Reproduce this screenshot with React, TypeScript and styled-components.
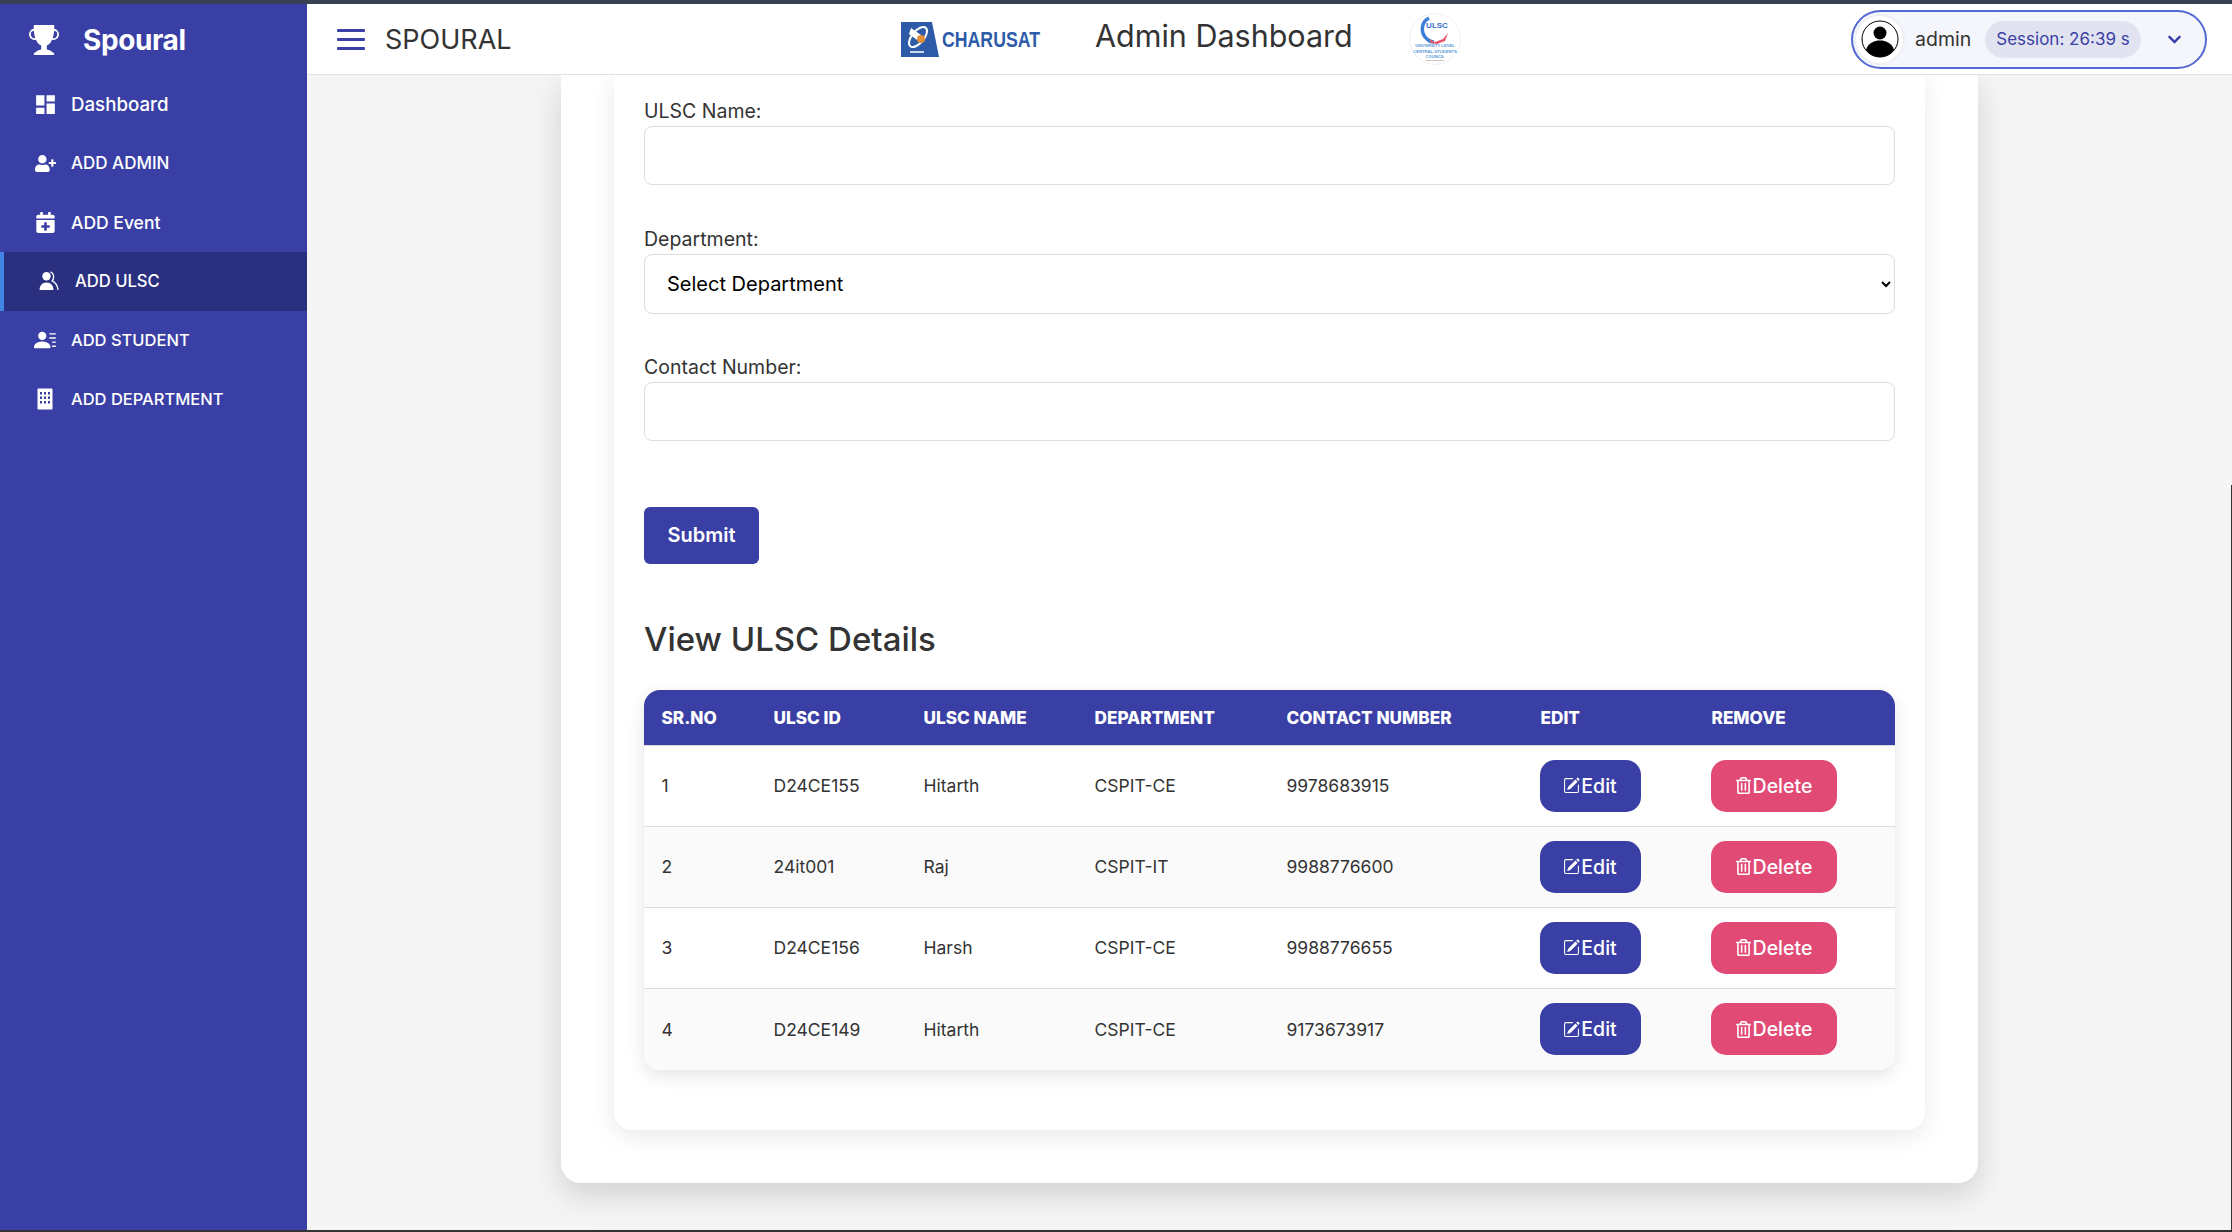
import React from 'react';
import styled, { createGlobalStyle } from 'styled-components';
import { BsTrophyFill, BsPersonLinesFill, BsPencilSquare } from 'react-icons/bs';
import { MdDashboard } from 'react-icons/md';
import { FaRegTrashAlt, FaChevronDown, FaUserPlus, FaCalendarPlus } from 'react-icons/fa';

const INDIGO = '#3a3fa5';
const FONT = 'Inter, "Noto Sans", "Liberation Sans", sans-serif';

const GlobalStyle = createGlobalStyle`
  * { box-sizing: border-box; }
  html, body { margin: 0; height: 100%; overflow: hidden; }
  body { font-family: ${FONT}; background: #f5f5f5; color: #333; }
`;

const Page = styled.div`
  height: 1232px;
  display: flex;
  border-top: 4px solid #374151;
  border-bottom: 2px solid #333;
`;

const Sidebar = styled.aside`
  width: 307px;
  flex: none;
  background: ${INDIGO};
  color: #fff;
`;

const Brand = styled.div`
  height: 71px;
  display: flex;
  align-items: center;
  gap: 24px;
  padding-left: 29px;
  font-size: 28px;
  font-weight: 700;
  letter-spacing: -0.4px;

  svg { width: 30px; height: 30px; }
`;

const NavItem = styled.div<{ $active?: boolean; $size: number }>`
  height: 59px;
  display: flex;
  align-items: center;
  gap: 16px;
  padding-left: 35px;
  padding-bottom: 1px;
  font-size: ${p => p.$size}px;
  font-weight: 500;
  background: ${p => (p.$active ? '#2a2f80' : 'transparent')};
  border-left: ${p => (p.$active ? '4px solid #4285e4' : 'none')};
`;

const IconSlot = styled.span`
  width: 20px;
  flex: none;
  display: flex;
  align-items: center;
  justify-content: center;

  svg { flex: none; }
`;

const Main = styled.div`
  flex: 1;
  min-width: 0;
  display: flex;
  flex-direction: column;
`;

const Header = styled.header`
  height: 71px;
  flex: none;
  display: flex;
  align-items: center;
  background: #fff;
  padding: 0 25px 0 30px;
  border-bottom: 1px solid #e2e2e2;
  position: relative;
  z-index: 2;
`;

const Hamburger = styled.div`
  width: 28px;
  display: flex;
  flex-direction: column;
  gap: 6px;
  margin-right: 20px;

  span { height: 3px; background: ${INDIGO}; border-radius: 1px; }
`;

const AppName = styled.div`
  width: 126px;
  font-size: 27px;
  font-weight: 400;
  color: #333;
  white-space: nowrap;
`;

const CenterGroup = styled.div`
  display: flex;
  align-items: center;
  gap: 55px;
  margin-left: 390px;
`;

const PageTitle = styled.div`
  width: 259px;
  padding-bottom: 7px;
  font-size: 30.5px;
  font-weight: 400;
  color: #333;
  white-space: nowrap;
`;

const UserPill = styled.div`
  margin-left: auto;
  width: 356px;
  height: 59px;
  display: flex;
  align-items: center;
  padding-left: 3px;
  border: 2px solid #5468d4;
  border-radius: 30px;
  background: #f5f6fb;
`;

const Avatar = styled.div`
  width: 47px;
  height: 47px;
  flex: none;
  border-radius: 50%;
  background: #fff;
  display: flex;
  align-items: center;
  justify-content: center;
  box-shadow: 0 0 4px rgba(0, 0, 0, 0.08);
`;

const UserName = styled.span`
  margin-left: 12px;
  width: 70px;
  font-size: 19.5px;
  color: #333;
`;

const SessionBadge = styled.span`
  width: 156px;
  height: 37px;
  display: flex;
  align-items: center;
  justify-content: center;
  border-radius: 19px;
  background: #e1e3f1;
  color: ${INDIGO};
  font-size: 17px;
  white-space: nowrap;
`;

const Chevron = styled.span`
  margin-left: 26px;
  display: flex;
  color: ${INDIGO};

  svg { width: 15px; height: 15px; }
`;

const Content = styled.main`
  flex: 1;
  min-height: 0;
  overflow: hidden;
  padding-left: 254px;
`;

const OuterCard = styled.div`
  width: 1417px;
  height: 1108px;
  padding: 0 53px;
  background: #fff;
  border-radius: 0 0 20px 20px;
  box-shadow: 0 12px 32px rgba(0, 0, 0, 0.15);
`;

const InnerCard = styled.div`
  height: 1055px;
  padding: 24px 30px 0;
  background: #fff;
  border-radius: 0 0 18px 18px;
  box-shadow: 0 6px 24px rgba(0, 0, 0, 0.09);
`;

const Field = styled.div`
  height: 128px;
`;

const Label = styled.label`
  display: block;
  height: 27px;
  font-size: 19.5px;
  line-height: 25px;
  color: #333;
`;

const TextInput = styled.input`
  display: block;
  width: 100%;
  height: 59px;
  border: 1px solid #ddd;
  border-radius: 8px;
  background: #fff;
  outline: none;
`;

const SelectInput = styled.select`
  display: block;
  width: 100%;
  height: 60px;
  margin-bottom: 1px;
  padding-left: 18px;
  border: 1px solid #ddd;
  border-radius: 8px;
  background: #fff;
  color: #000;
  font-family: ${FONT};
  font-size: 20px;
`;

const SubmitButton = styled.button`
  display: block;
  width: 115px;
  height: 57px;
  margin-top: 24px;
  padding-bottom: 3px;
  border: none;
  border-radius: 6px;
  background: ${INDIGO};
  color: #fff;
  font-family: ${FONT};
  font-size: 20px;
  font-weight: 600;
`;

const SectionTitle = styled.h2`
  margin: 51px 0 27px;
  height: 48px;
  font-size: 33px;
  line-height: 48px;
  font-weight: 500;
  color: #333;
`;

const TableWrap = styled.div`
  border-radius: 16px;
  overflow: hidden;
  box-shadow: 0 6px 18px rgba(0, 0, 0, 0.1);
`;

const Table = styled.table`
  width: 100%;
  table-layout: fixed;
  border-collapse: collapse;
`;

const HeadCell = styled.th<{ $width: number }>`
  width: ${p => p.$width}px;
  height: 55px;
  padding: 0 0 0 17.5px;
  background: ${INDIGO};
  color: #fff;
  font-size: 17.2px;
  font-weight: 800;
  text-align: left;
  white-space: nowrap;
  border-bottom: 1px solid #ddd;
`;

const Row = styled.tr<{ $even: boolean }>`
  height: 81px;
  background: ${p => (p.$even ? '#fafafa' : '#fff')};
  border-bottom: 1px solid #ddd;

  &:last-child { height: 82px; border-bottom: none; }
`;

const Cell = styled.td`
  padding: 0 0 0 17.5px;
  font-size: 17.5px;
  color: #333;
  white-space: nowrap;
`;

const ActionButton = styled.button<{ $danger?: boolean }>`
  width: ${p => (p.$danger ? '126px' : '101px')};
  height: 52px;
  margin-left: -1px;
  display: flex;
  align-items: center;
  justify-content: center;
  gap: 1px;
  border: none;
  border-radius: 15px;
  background: ${p => (p.$danger ? '#e04a75' : INDIGO)};
  color: #fff;
  font-family: ${FONT};
  font-size: 19.5px;
  font-weight: 500;

  svg { width: 17px; height: 17px; }
`;

const WindowEdge = styled.div`
  position: fixed;
  right: 0;
  top: 485px;
  bottom: 0;
  width: 1px;
  background: #333;
`;

const FriendsIcon = () => (
  <svg width="20" height="20" viewBox="0 0 20 20" fill="currentColor">
    <path d="M11.5 .8c2 .9 3.100 2.900 3.100 5.100 0 1.600-.5 3-1.500 4 3.200 1.500 5.400 4.800 6 8.900" fill="none" stroke="currentColor" strokeWidth="1.300" />
    <circle cx="7.500" cy="5.200" r="4.200" />
    <path d="M0 19.500c0-5 3-8.500 7.500-8.500s7.500 3.500 7.500 8.500z" stroke="#2a2f80" strokeWidth="1" />
  </svg>
);

const BuildingIcon = () => (
  <svg width="16" height="22" viewBox="0 0 16 22">
    <rect width="15" height="21" x=".5" y=".5" rx="1" fill="#fff" />
    {[4, 8.500, 13].map(y =>
      [3, 7, 11].map(x => <rect key={`${x}-${y}`} x={x} y={y} width="2" height="2.500" fill={INDIGO} />)
    )}
  </svg>
);

const UserAvatarIcon = () => (
  <svg width="38" height="38" viewBox="0 0 38 38">
    <circle cx="19" cy="19" r="18" fill="#fff" stroke="#000" strokeWidth="1" />
    <circle cx="19" cy="13" r="6.500" fill="#000" />
    <path d="M5 30c2-7 8-9.500 14-9.500S31 23 33 30c-3.500 4.500-8.500 7-14 7S8.500 34.500 5 30z" fill="#000" />
  </svg>
);

const CharusatLogo = () => (
  <svg width="139" height="37" viewBox="0 0 139 37" overflow="visible">
    <path d="M0 1h31l7 35H0z" fill="#2e5ba8" />
    <ellipse cx="17" cy="16" rx="12" ry="6" fill="none" stroke="#fff" strokeWidth="2" transform="rotate(-50 17 16)" />
    <path d="M10 7l10 7-4 5-8-6z" fill="#fff" />
    <circle cx="20" cy="18" r="4" fill="#e2913a" />
    <rect x="9" y="30" width="14" height="2" fill="#c9d6ec" />
    <text x="41" y="26" fontFamily='"Liberation Sans", sans-serif' fontSize="22" fontWeight="700" fill="#2e5ba8" textLength="98" lengthAdjust="spacingAndGlyphs">CHARUSAT</text>
  </svg>
);

const UlscLogo = () => (
  <svg width="52" height="52" viewBox="0 0 52 52" overflow="visible">
    <circle cx="26" cy="26" r="25.500" fill="#fff" stroke="#f0f0f0" />
    <path d="M20 5C12 9 11 20 18 26c2 2 5 3 7 3" fill="none" stroke="#3b7fd9" strokeWidth="3.500" />
    <path d="M20 26l6 3 8-3 5-6-3 8-8 3-6-1z" fill="#e8576a" />
    <text x="28" y="15" fontFamily='"Liberation Sans", sans-serif' fontSize="8" fontWeight="700" fill="#3b6fc9" textAnchor="middle">ULSC</text>
    <text x="26" y="34" fontFamily='"Liberation Sans", sans-serif' fontSize="4.200" fontWeight="700" fill="#5b9ad8" textAnchor="middle">UNIVERSITY LEVEL</text>
    <text x="26" y="39.500" fontFamily='"Liberation Sans", sans-serif' fontSize="4.200" fontWeight="700" fill="#5b9ad8" textAnchor="middle">CENTRAL STUDENTS</text>
    <text x="26" y="44.500" fontFamily='"Liberation Sans", sans-serif' fontSize="4.200" fontWeight="700" fill="#5b9ad8" textAnchor="middle">COUNCIL</text>
    <rect x="17" y="47" width="18" height="1" fill="#c8c8c8" />
  </svg>
);

const navItems = [
  { label: 'Dashboard', size: 18.7, icon: <MdDashboard size={25} /> },
  { label: 'ADD ADMIN', size: 17, icon: <FaUserPlus size={21} /> },
  { label: 'ADD Event', size: 17.5, icon: <FaCalendarPlus size={21} /> },
  { label: 'ADD ULSC', size: 16.6, icon: <FriendsIcon />, active: true },
  { label: 'ADD STUDENT', size: 16.5, icon: <BsPersonLinesFill size={22} /> },
  { label: 'ADD DEPARTMENT', size: 16.5, icon: <BuildingIcon /> },
];

const columns = [
  { label: 'SR.NO', width: 112 },
  { label: 'ULSC ID', width: 150 },
  { label: 'ULSC NAME', width: 171 },
  { label: 'DEPARTMENT', width: 192 },
  { label: 'CONTACT NUMBER', width: 254 },
  { label: 'EDIT', width: 171 },
  { label: 'REMOVE', width: 202 },
];

const rows = [
  ['1', 'D24CE155', 'Hitarth', 'CSPIT-CE', '9978683915'],
  ['2', '24it001', 'Raj', 'CSPIT-IT', '9988776600'],
  ['3', 'D24CE156', 'Harsh', 'CSPIT-CE', '9988776655'],
  ['4', 'D24CE149', 'Hitarth', 'CSPIT-CE', '9173673917'],
];

const App: React.FC = () => {
  return (
    <Page>
      <GlobalStyle />
      <Sidebar>
        <Brand>
          <BsTrophyFill />
          Spoural
        </Brand>
        {navItems.map(item => (
          <NavItem key={item.label} $active={item.active} $size={item.size}>
            <IconSlot>{item.icon}</IconSlot>
            {item.label}
          </NavItem>
        ))}
      </Sidebar>

      <Main>
        <Header>
          <Hamburger><span /><span /><span /></Hamburger>
          <AppName>SPOURAL</AppName>
          <CenterGroup>
            <CharusatLogo />
            <PageTitle>Admin Dashboard</PageTitle>
            <UlscLogo />
          </CenterGroup>
          <UserPill>
            <Avatar><UserAvatarIcon /></Avatar>
            <UserName>admin</UserName>
            <SessionBadge>Session: 26:39 s</SessionBadge>
            <Chevron><FaChevronDown /></Chevron>
          </UserPill>
        </Header>

        <Content>
          <OuterCard>
            <InnerCard>
              <Field>
                <Label>ULSC Name:</Label>
                <TextInput />
              </Field>
              <Field>
                <Label>Department:</Label>
                <SelectInput defaultValue="">
                  <option value="">Select Department</option>
                </SelectInput>
              </Field>
              <Field>
                <Label>Contact Number:</Label>
                <TextInput />
              </Field>
              <SubmitButton>Submit</SubmitButton>
              <SectionTitle>View ULSC Details</SectionTitle>
              <TableWrap>
                <Table>
                  <thead>
                    <tr>
                      {columns.map(col => (
                        <HeadCell key={col.label} $width={col.width}>{col.label}</HeadCell>
                      ))}
                    </tr>
                  </thead>
                  <tbody>
                    {rows.map((row, i) => (
                      <Row key={row[0]} $even={i % 2 === 1}>
                        {row.map((value, j) => (
                          <Cell key={j}>{value}</Cell>
                        ))}
                        <Cell>
                          <ActionButton><BsPencilSquare />Edit</ActionButton>
                        </Cell>
                        <Cell>
                          <ActionButton $danger><FaRegTrashAlt />Delete</ActionButton>
                        </Cell>
                      </Row>
                    ))}
                  </tbody>
                </Table>
              </TableWrap>
            </InnerCard>
          </OuterCard>
        </Content>
      </Main>
      <WindowEdge />
    </Page>
  );
};

export default App;
